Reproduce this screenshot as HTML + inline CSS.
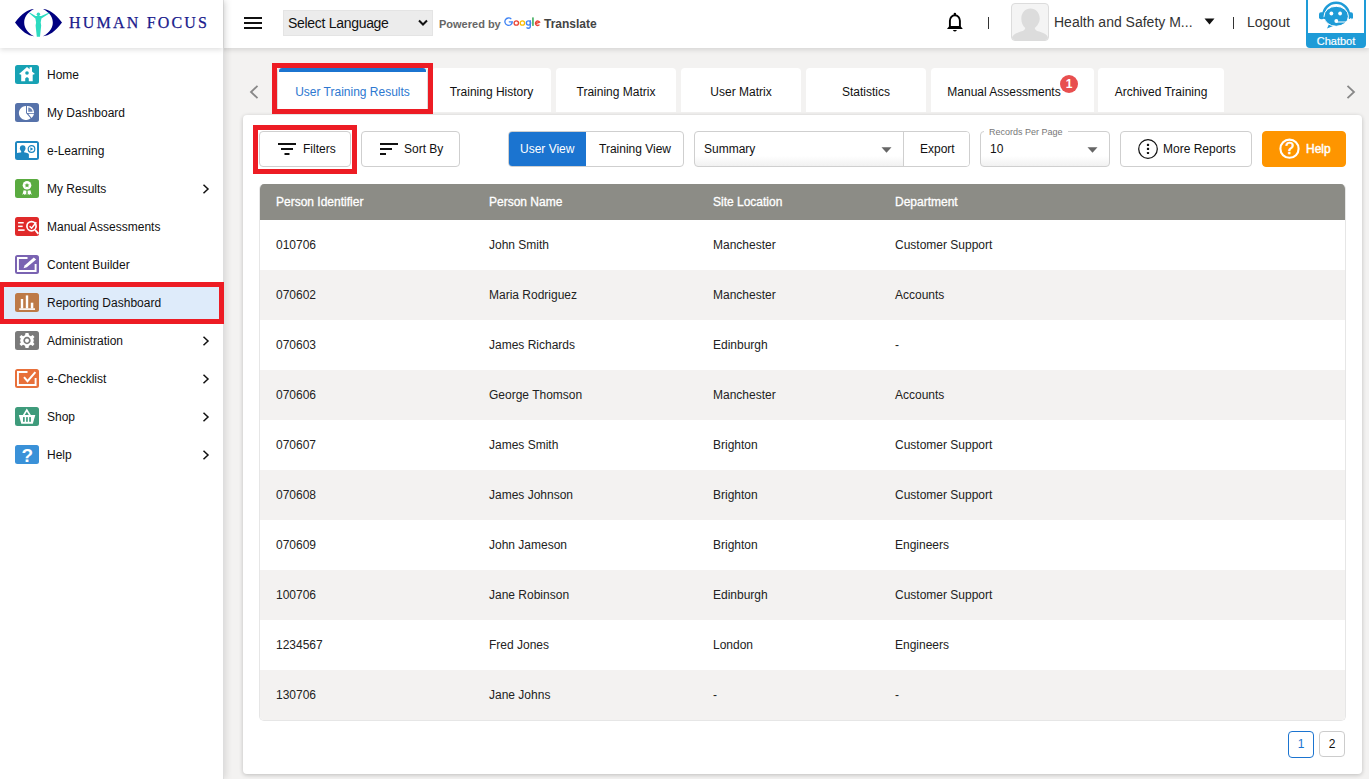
<!DOCTYPE html>
<html><head><meta charset="utf-8">
<style>
*{box-sizing:border-box;margin:0;padding:0}
html,body{width:1369px;height:779px;overflow:hidden}
body{position:relative;background:#f3f2f1;font-family:"Liberation Sans",sans-serif;color:#222;font-size:12px}
.abs{position:absolute}
/* sidebar */
#side{position:absolute;left:0;top:0;width:223px;height:779px;background:#fff;box-shadow:1px 0 0 #dedede,3px 0 7px rgba(0,0,0,.11);z-index:3}
#logo{position:absolute;left:0;top:0;width:223px;height:48px;background:#fff;box-shadow:0 2px 5px rgba(0,0,0,.12)}
#logo .txt{position:absolute;left:69px;top:13px;font-family:"Liberation Serif",serif;font-size:16px;letter-spacing:2.2px;color:#1a1a8c;line-height:20px;-webkit-text-stroke:0.25px #1a1a8c}
.item{position:absolute;left:0;width:223px;height:38px}
.item .ic{position:absolute;left:15px;top:10px;width:24px;height:19px;border-radius:2.5px}
.item .ic svg{position:absolute;left:0;top:0}
.item .lb{position:absolute;left:47px;top:13px;font-size:12px;line-height:14px;color:#111}
.item .chev{position:absolute;left:202px;top:15px}
/* header */
#hdr{position:absolute;left:223px;top:0;width:1146px;height:48px;background:#fff;box-shadow:0 2px 5px rgba(0,0,0,.12);z-index:2}
/* content */
.tab{position:absolute;top:68px;height:44px;background:#fff;border-radius:4px 4px 0 0;font-size:12px;line-height:49px;text-align:center;color:#111}
#card{position:absolute;left:243px;top:115px;width:1119px;height:659px;background:#fff;border-radius:4px;box-shadow:0 1px 4px rgba(0,0,0,.22)}
.btn{position:absolute;top:131px;height:36px;border:1px solid #cfcfcf;border-radius:4px;background:#fff;font-size:12px;line-height:34px;color:#111}
.redbox{position:absolute;border:5px solid #ed1c24;z-index:10}
table{border-collapse:collapse}
#tbl{position:absolute;left:259px;top:184px;width:1087px;height:537px;border:1px solid #e6e6e6;border-top:none;border-radius:5px;overflow:hidden}
.hrow{position:absolute;left:0;top:0;width:1087px;height:36px;background:#8c8c86;color:#fff}
.hrow span{position:absolute;top:11px;font-size:12px;line-height:14px;-webkit-text-stroke:0.3px #fff}
.row{position:absolute;left:0;width:1087px;height:50px}
.row span{position:absolute;top:18px;font-size:12px;line-height:14px;color:#222}
.row.alt{background:#f3f2f1}
.c1{left:16px}.c2{left:229px}.c3{left:453px}.c4{left:635px}
</style></head><body>

<div id="side">
  <div id="logo">
    <svg class="abs" style="left:14px;top:8px" width="50" height="30" viewBox="0 0 50 30">
      <path d="M1 14.5 C8 5 14 1.5 20 1 C12.5 5 10.2 10 10.2 14.5 C10.2 19 12.5 24 20 28.3 C14 27.5 8 24 1 14.5Z" fill="#000080"/>
      <path d="M48 14.5 C41 5 35 1.5 29 1 C36.5 5 38.8 10 38.8 14.5 C38.8 19 36.5 24 29 28.3 C35 27.5 41 24 48 14.5Z" fill="#000080"/>
      <g fill="#2ddbc0"><circle cx="24.4" cy="6.2" r="1.75"/><path d="M15.6 4.4 L21.6 8 L27.2 8 L35.2 4.4 L35.5 5.3 L27.4 10.6 L26.7 14.6 L27.2 17.6 L26.5 24 L26 28.8 L22.8 28.8 L22.3 24 L21.6 17.6 L22.1 14.6 L21.4 10.6 L15.3 5.3 Z"/><rect x="23.6" y="7" width="1.6" height="1.5"/></g>
    </svg>
    <div class="txt">HUMAN FOCUS</div>
  </div>
  <div id="nav">
  <div class="item" style="top:55px"><div class="ic" style="background:#17a2b4"><svg width="24" height="19" viewBox="0 0 24 19"><path d="M12 2 L14.6 4.3 L14.6 2.3 L17 2.3 L17 6.4 L20 9 L17.7 9.8 L17.7 16.3 L13.8 16.3 L13.8 13.4 Q12 11.2 10.2 13.4 L10.2 16.3 L6.2 16.3 L6.2 9.8 L4 9 Z" fill="#fff"/><circle cx="12" cy="8" r="1.8" fill="#17a2b4"/></svg></div><div class="lb">Home</div></div>
  <div class="item" style="top:93px"><div class="ic" style="background:#5672aa"><svg width="24" height="19" viewBox="0 0 24 19"><path d="M11 3 L11 10 L15.6 15.2 A7 7 0 1 1 11 3 Z" fill="#fff"/><path d="M12.6 3.6 A6.4 6.4 0 0 1 18.4 9.4 L12.6 9.4 Z" fill="#6f86b6" stroke="#fff" stroke-width="1.3"/><path d="M13.2 10.8 L19 10.8 A7 7 0 0 1 16.6 15 Z" fill="#fff"/></svg></div><div class="lb">My Dashboard</div></div>
  <div class="item" style="top:131px"><div class="ic" style="background:#1f87c0"><svg width="24" height="19" viewBox="0 0 24 19"><rect x="2" y="2" width="20" height="15" fill="#fff"/><ellipse cx="7.7" cy="7.3" rx="2.8" ry="3.1" fill="#1f87c0"/><rect x="6.2" y="9" width="3" height="3" fill="#1f87c0"/><path d="M1 17 L1 12.6 Q2.5 11.6 7.7 11.3 Q13.3 11.6 13.9 13.3 L13.9 17Z" fill="#1f87c0"/><circle cx="16.5" cy="8" r="3.3" fill="none" stroke="#1f87c0" stroke-width="1.2"/><path d="M15.4 6.3 L18.3 8 L15.4 9.7Z" fill="#1f87c0"/></svg></div><div class="lb">e-Learning</div></div>
  <div class="item" style="top:169px"><div class="ic" style="background:#5aab40"><svg width="24" height="19" viewBox="0 0 24 19"><circle cx="12" cy="6.3" r="4.3" fill="#fff"/><path d="M12 3.9 L12.8 5.5 L14.5 5.6 L13.2 6.8 L13.6 8.5 L12 7.6 L10.4 8.5 L10.8 6.8 L9.5 5.6 L11.2 5.5Z" fill="#5aab40"/><path d="M8.6 11.2 L11.4 11.8 L11.2 15.9 L10.2 14.9 L9.4 15.9 L8.7 14.8 L7.3 15.9Z" fill="#fff"/><path d="M15.4 11.2 L12.6 11.8 L12.8 15.9 L13.8 14.9 L14.6 15.9 L15.3 14.8 L16.7 15.9Z" fill="#fff"/></svg></div><div class="lb">My Results</div><svg class="chev" width="8" height="10" viewBox="0 0 8 10"><path d="M1.5 0.8 L6 5 L1.5 9.2" fill="none" stroke="#111" stroke-width="1.5"/></svg></div>
  <div class="item" style="top:207px"><div class="ic" style="background:#e02a2a"><svg width="24" height="19" viewBox="0 0 24 19"><rect x="3.1" y="5" width="5.6" height="1.5" fill="#fff"/><rect x="3.1" y="8.6" width="4.6" height="1.5" fill="#fff"/><rect x="3.1" y="12.3" width="6.5" height="1.6" fill="#fff"/><circle cx="16.5" cy="9.2" r="4.6" fill="none" stroke="#fff" stroke-width="1.7"/><path d="M14.6 9.3 L16.6 11.2 L21.3 5.2" fill="none" stroke="#fff" stroke-width="1.5"/><path d="M20.2 13 L23.4 16.8" stroke="#fff" stroke-width="1.9"/></svg></div><div class="lb">Manual Assessments</div></div>
  <div class="item" style="top:245px"><div class="ic" style="background:#7a63b2"><svg width="24" height="19" viewBox="0 0 24 19"><path d="M12.5 2.95 L2.95 2.95 L2.95 16 L20.6 16 L20.6 9" fill="none" stroke="#fff" stroke-width="1.9"/><path d="M8.6 13.2 L9.6 10.4 L18.8 2.6 L21.2 4.6 L11.8 12.3 Z" fill="#fff"/></svg></div><div class="lb">Content Builder</div></div>
  <div class="item" style="top:283px;background:#deebfa"><div class="ic" style="background:#bd7a47"><svg width="24" height="19" viewBox="0 0 24 19"><rect x="4.2" y="15.3" width="15.8" height="1.6" fill="#fff"/><rect x="5.8" y="6" width="2.4" height="9.5" fill="#fff"/><rect x="10.8" y="2.4" width="2.4" height="13" fill="#fff"/><rect x="15.8" y="9.7" width="2.5" height="5.8" fill="#fff"/></svg></div><div class="lb">Reporting Dashboard</div></div>
  <div class="item" style="top:321px"><div class="ic" style="background:#7a7a7a"><svg width="24" height="19" viewBox="0 0 24 19"><g transform="translate(12 9.5)"><path d="M-1.5 -7.4 L1.5 -7.4 L2 -5.3 L3.9 -4.3 L5.7 -5.6 L7.5 -3.6 L6.2 -1.9 L6.9 0 L6.2 1.9 L7.5 3.6 L5.7 5.6 L3.9 4.3 L2 5.3 L1.5 7.4 L-1.5 7.4 L-2 5.3 L-3.9 4.3 L-5.7 5.6 L-7.5 3.6 L-6.2 1.9 L-6.9 0 L-6.2 -1.9 L-7.5 -3.6 L-5.7 -5.6 L-3.9 -4.3 L-2 -5.3Z" fill="#fff"/><circle r="2.8" fill="none" stroke="#7a7a7a" stroke-width="1.7"/></g></svg></div><div class="lb">Administration</div><svg class="chev" width="8" height="10" viewBox="0 0 8 10"><path d="M1.5 0.8 L6 5 L1.5 9.2" fill="none" stroke="#111" stroke-width="1.5"/></svg></div>
  <div class="item" style="top:359px"><div class="ic" style="background:#e8703a"><svg width="24" height="19" viewBox="0 0 24 19"><path d="M12.5 2.95 L2.95 2.95 L2.95 16 L20.6 16 L20.6 9" fill="none" stroke="#fff" stroke-width="1.9"/><path d="M9 8.2 L12.5 12.2 L20.4 3.2" fill="none" stroke="#fff" stroke-width="2"/></svg></div><div class="lb">e-Checklist</div><svg class="chev" width="8" height="10" viewBox="0 0 8 10"><path d="M1.5 0.8 L6 5 L1.5 9.2" fill="none" stroke="#111" stroke-width="1.5"/></svg></div>
  <div class="item" style="top:397px"><div class="ic" style="background:#3e9b7b"><svg width="24" height="19" viewBox="0 0 24 19"><path d="M3.8 8 L20.3 8 L17.8 16.7 L6.3 16.7Z" fill="#fff"/><path d="M8.5 8.5 L11.8 3 L15.2 8.5" fill="none" stroke="#fff" stroke-width="1.6"/><rect x="8" y="10.1" width="1.7" height="4.7" fill="#3e9b7b"/><rect x="11.1" y="10.1" width="1.7" height="4.7" fill="#3e9b7b"/><rect x="14.2" y="10.1" width="1.7" height="4.7" fill="#3e9b7b"/></svg></div><div class="lb">Shop</div><svg class="chev" width="8" height="10" viewBox="0 0 8 10"><path d="M1.5 0.8 L6 5 L1.5 9.2" fill="none" stroke="#111" stroke-width="1.5"/></svg></div>
  <div class="item" style="top:435px"><div class="ic" style="background:#3a91d8"><svg width="24" height="19" viewBox="0 0 24 19"><text x="12.2" y="16.6" text-anchor="middle" font-family="Liberation Sans" font-weight="700" font-size="19" fill="#fff">?</text></svg></div><div class="lb">Help</div><svg class="chev" width="8" height="10" viewBox="0 0 8 10"><path d="M1.5 0.8 L6 5 L1.5 9.2" fill="none" stroke="#111" stroke-width="1.5"/></svg></div>
  </div>
</div>

<div id="hdr">
  <svg class="abs" style="left:21px;top:16px" width="18" height="14" viewBox="0 0 18 14"><rect x="0" y="1" width="18" height="2" fill="#111"/><rect x="0" y="6" width="18" height="2" fill="#111"/><rect x="0" y="11" width="18" height="2" fill="#111"/></svg>
  <div class="abs" style="left:60px;top:10px;width:150px;height:26px;background:#ececec;border:1px solid #e4e4e4"></div>
  <div class="abs" style="left:65px;top:14.5px;font-size:14px;line-height:16px;color:#111;letter-spacing:-0.3px">Select Language</div>
  <svg class="abs" style="left:195px;top:19px" width="10" height="8" viewBox="0 0 10 8"><path d="M1 1.5 L5 5.5 L9 1.5" fill="none" stroke="#111" stroke-width="2"/></svg>
  <div class="abs" style="left:216px;top:18px;font-size:11px;line-height:13px;color:#666;font-weight:700">Powered by</div>
  <svg class="abs" style="left:280px;top:16px" width="40" height="14" viewBox="0 0 40 14"><path d="M8.3 3.1 A3.7 3.7 0 1 0 9.3 5.9 L5.8 5.9" fill="none" stroke="#4285f4" stroke-width="1.35"/><circle cx="13.3" cy="7" r="2.2" fill="none" stroke="#ea4335" stroke-width="1.3"/><circle cx="19.4" cy="7" r="2.2" fill="none" stroke="#fbbc05" stroke-width="1.3"/><circle cx="25.5" cy="7" r="2.1" fill="none" stroke="#4285f4" stroke-width="1.4"/><path d="M27.3 4.2 L27.3 10.3 Q27.3 12.3 25.4 12.3 Q24.2 12.3 23.6 11.4" fill="none" stroke="#4285f4" stroke-width="1.4"/><rect x="29.2" y="1.4" width="1.5" height="8.5" fill="#34a853"/><path d="M32.6 7.6 L36.6 6.2 A2.2 2.2 0 1 0 36.4 8.6" fill="none" stroke="#ea4335" stroke-width="1.4"/></svg>
  <div class="abs" style="left:321px;top:17px;font-size:12px;line-height:14px;color:#444;font-weight:700">Translate</div>
  <svg class="abs" style="left:717px;top:8px" width="30" height="28" viewBox="0 0 30 28"><path d="M9.9 18.8 L9.9 12.8 A5 5.6 0 0 1 19.9 12.8 L19.9 18.8" fill="none" stroke="#000" stroke-width="1.9"/><path d="M7 20.9 L9.3 18 L20.5 18 L22.8 20.9 Z" fill="#000"/><circle cx="14.9" cy="5.9" r="1.25" fill="#000"/><path d="M12.8 22 L17 22 Q14.9 25 12.8 22Z" fill="#000"/></svg>
  <div class="abs" style="left:765px;top:17px;width:1px;height:12px;background:#333"></div>
  <div class="abs" style="left:788px;top:3px;width:38px;height:38px;border:1px solid #dcdcdc;border-radius:4px;background:#f4f4f4;overflow:hidden">
    <svg class="abs" style="left:0;top:0" width="36" height="36" viewBox="0 0 36 36"><path d="M18.5 4.5 C13.5 4.5 9.3 8.5 9.3 14.5 C9.3 18.5 10.8 22 13.3 24 C12.8 26 11.8 26.6 8.8 27.6 C3.8 29.2 0.8 30.8 0 33.5 L0 36 L36 36 L36 33.5 C35.2 30.8 32.2 29.2 27.2 27.6 C24.2 26.6 23.2 26 22.7 24 C25.2 22 27.7 18.5 27.7 14.5 C27.7 8.5 23.5 4.5 18.5 4.5Z" fill="#dcdcdc"/></svg>
  </div>
  <div class="abs" style="left:831px;top:14px;font-size:14px;line-height:17px;color:#333">Health and Safety M...</div>
  <svg class="abs" style="left:981px;top:18px" width="11" height="7" viewBox="0 0 11 7"><path d="M0.5 0.5 L10.5 0.5 L5.5 6.5Z" fill="#111"/></svg>
  <div class="abs" style="left:1010px;top:17px;width:1px;height:12px;background:#333"></div>
  <div class="abs" style="left:1024px;top:14px;font-size:14px;line-height:17px;color:#333">Logout</div>
  <div class="abs" style="left:1083px;top:0;width:60px;height:48px;background:#1e9bd7;border-radius:0 0 4px 4px">
    <div class="abs" style="left:2px;top:0;width:56px;height:33px;background:#fff"></div>
    <svg class="abs" style="left:12px;top:1px" width="37" height="30" viewBox="0 0 37 30"><path d="M5.2 15 A13 13.2 0 0 1 31.2 15" fill="none" stroke="#1e9bd7" stroke-width="2.6"/><rect x="1" y="11.2" width="5.2" height="7" rx="2" fill="#1e9bd7"/><rect x="30.4" y="11.2" width="4.6" height="7" rx="2" fill="#1e9bd7"/><path d="M11 23 L9 27.5 L16.5 24.5Z" fill="#1e9bd7"/><ellipse cx="18.2" cy="15.3" rx="12.2" ry="10" fill="#1e9bd7" stroke="#fff" stroke-width="1"/><path d="M5.5 18 L5.5 16 L7 16 L7 18Z" fill="#1e9bd7"/><circle cx="13.4" cy="12.5" r="1.9" fill="#fff"/><circle cx="22.1" cy="12.5" r="1.9" fill="#fff"/><circle cx="18.3" cy="20" r="1.9" fill="#fff"/><path d="M18.3 21 L29.5 21 Q32.5 20.5 33 17" fill="none" stroke="#fff" stroke-width="1.1"/></svg>
    <div class="abs" style="left:0;top:35px;width:60px;text-align:center;font-size:11px;line-height:13px;color:#fff;-webkit-text-stroke:0.2px #fff">Chatbot</div>
  </div>
</div>

<svg class="abs" style="left:249px;top:85px" width="10" height="14" viewBox="0 0 10 14"><path d="M8.5 0.8 L2 7 L8.5 13.2" fill="none" stroke="#888" stroke-width="1.8"/></svg>
<svg class="abs" style="left:1346px;top:85px" width="10" height="14" viewBox="0 0 10 14"><path d="M1.5 0.8 L8 7 L1.5 13.2" fill="none" stroke="#888" stroke-width="1.8"/></svg>
<div class="tab" style="left:277px;width:151px;color:#2d78d0;border:1px solid #ddd;border-bottom:none;border-top:none"><div class="abs" style="left:1px;top:0;right:1px;height:4px;background:#1b74d0;border-radius:3px 3px 0 0"></div>User Training Results</div>
<div class="tab" style="left:432px;width:119px">Training History</div>
<div class="tab" style="left:556px;width:120px">Training Matrix</div>
<div class="tab" style="left:681px;width:120px">User Matrix</div>
<div class="tab" style="left:806px;width:120px">Statistics</div>
<div class="tab" style="left:931px;width:163px;padding-right:17px">Manual Assessments<div class="abs" style="left:129px;top:7px;width:18px;height:18px;border-radius:9px;background:#e84f4f;color:#fff;font-size:12px;line-height:18px;font-weight:700;text-align:center">1</div></div>
<div class="tab" style="left:1098px;width:126px">Archived Training</div>
<div id="card"></div>
<div class="btn" style="left:259px;width:92px"><svg class="abs" style="left:18px;top:11px" width="19" height="13" viewBox="0 0 19 13"><rect x="0" y="0" width="18" height="2" fill="#111"/><rect x="3" y="5" width="12" height="2" fill="#111"/><rect x="6.5" y="10" width="5" height="2" fill="#111"/></svg><span class="abs" style="left:43px;top:10px;line-height:14px">Filters</span></div>
<div class="btn" style="left:361px;width:99px"><svg class="abs" style="left:18px;top:11px" width="19" height="13" viewBox="0 0 19 13"><rect x="0" y="0" width="18" height="2" fill="#111"/><rect x="0" y="5" width="12" height="2" fill="#111"/><rect x="0" y="10" width="6" height="2" fill="#111"/></svg><span class="abs" style="left:42px;top:10px;line-height:14px">Sort By</span></div>
<div class="btn" style="left:508px;width:176px;overflow:hidden"><div class="abs" style="left:-1px;top:-1px;width:78px;height:36px;background:#1b74d0;border-radius:4px 0 0 4px"></div><span class="abs" style="left:11px;top:10px;line-height:14px;color:#fff">User View</span><span class="abs" style="left:90px;top:10px;line-height:14px">Training View</span></div>
<div class="btn" style="left:694px;width:276px;background:linear-gradient(#fff 70%,#f1f1f1)"><span class="abs" style="left:9px;top:10px;line-height:14px">Summary</span><svg class="abs" style="left:186px;top:15px" width="11" height="6" viewBox="0 0 11 6"><path d="M0.5 0.3 L10.5 0.3 L5.5 5.8Z" fill="#666"/></svg><div class="abs" style="left:208px;top:0;width:66px;height:34px;background:#fff;border-left:1px solid #cfcfcf;border-radius:0 3px 3px 0"></div><span class="abs" style="left:225px;top:10px;line-height:14px">Export</span></div>
<div class="btn" style="left:980px;width:130px;background:linear-gradient(#fff 70%,#f1f1f1)"><span class="abs" style="left:3px;top:-5px;padding:0 5px;background:#fff;font-size:9px;line-height:11px;color:#777">Records Per Page</span><span class="abs" style="left:9px;top:10px;line-height:14px">10</span><svg class="abs" style="left:106px;top:15px" width="11" height="6" viewBox="0 0 11 6"><path d="M0.5 0.3 L10.5 0.3 L5.5 5.8Z" fill="#666"/></svg></div>
<div class="btn" style="left:1120px;width:132px"><svg class="abs" style="left:17px;top:7px" width="21" height="21" viewBox="0 0 21 21"><circle cx="10" cy="10" r="9.3" fill="none" stroke="#111" stroke-width="1.25"/><rect x="8.9" y="4.8" width="2.2" height="2.2" rx="0.6" fill="#111"/><rect x="8.9" y="8.8" width="2.2" height="2.2" rx="0.6" fill="#111"/><rect x="8.9" y="12.9" width="2.2" height="2.2" rx="0.6" fill="#111"/></svg><span class="abs" style="left:42px;top:10px;line-height:14px">More Reports</span></div>
<div class="btn" style="left:1262px;width:84px;background:#fe9500;border-color:#fe9500"><svg class="abs" style="left:16px;top:6px" width="21" height="21" viewBox="0 0 21 21"><circle cx="10.5" cy="10.7" r="9.1" fill="none" stroke="#fff" stroke-width="2.1"/><text x="10.6" y="16.2" text-anchor="middle" font-family="Liberation Sans" font-weight="400" font-size="16" fill="#fff" stroke="#fff" stroke-width="0.6">?</text></svg><span class="abs" style="left:43px;top:10px;line-height:14px;color:#fff;-webkit-text-stroke:0.45px #fff">Help</span></div>
<div id="tbl">
<div class="hrow"><span class="c1">Person Identifier</span><span class="c2">Person Name</span><span class="c3">Site Location</span><span class="c4">Department</span></div>
<div class="row" style="top:36px"><span class="c1">010706</span><span class="c2">John Smith</span><span class="c3">Manchester</span><span class="c4">Customer Support</span></div>
<div class="row alt" style="top:86px"><span class="c1">070602</span><span class="c2">Maria Rodriguez</span><span class="c3">Manchester</span><span class="c4">Accounts</span></div>
<div class="row" style="top:136px"><span class="c1">070603</span><span class="c2">James Richards</span><span class="c3">Edinburgh</span><span class="c4">-</span></div>
<div class="row alt" style="top:186px"><span class="c1">070606</span><span class="c2">George Thomson</span><span class="c3">Manchester</span><span class="c4">Accounts</span></div>
<div class="row" style="top:236px"><span class="c1">070607</span><span class="c2">James Smith</span><span class="c3">Brighton</span><span class="c4">Customer Support</span></div>
<div class="row alt" style="top:286px"><span class="c1">070608</span><span class="c2">James Johnson</span><span class="c3">Brighton</span><span class="c4">Customer Support</span></div>
<div class="row" style="top:336px"><span class="c1">070609</span><span class="c2">John Jameson</span><span class="c3">Brighton</span><span class="c4">Engineers</span></div>
<div class="row alt" style="top:386px"><span class="c1">100706</span><span class="c2">Jane Robinson</span><span class="c3">Edinburgh</span><span class="c4">Customer Support</span></div>
<div class="row" style="top:436px"><span class="c1">1234567</span><span class="c2">Fred Jones</span><span class="c3">London</span><span class="c4">Engineers</span></div>
<div class="row alt" style="top:486px"><span class="c1">130706</span><span class="c2">Jane Johns</span><span class="c3">-</span><span class="c4">-</span></div>
</div>
<div class="abs" style="left:1288px;top:731px;width:26px;height:27px;border:1px solid #1b74d0;border-radius:4px;background:#fff;color:#1b74d0;font-size:12px;line-height:25px;text-align:center">1</div>
<div class="abs" style="left:1319px;top:731px;width:26px;height:26px;border:1px solid #ccc;border-radius:4px;background:#fff;color:#111;font-size:12px;line-height:24px;text-align:center">2</div>
<div class="redbox" style="left:-1px;top:282px;width:225px;height:42px"></div>
<div class="redbox" style="left:272px;top:63px;width:161px;height:51px"></div>
<div class="redbox" style="left:253px;top:125px;width:104px;height:49px"></div>


</body></html>
